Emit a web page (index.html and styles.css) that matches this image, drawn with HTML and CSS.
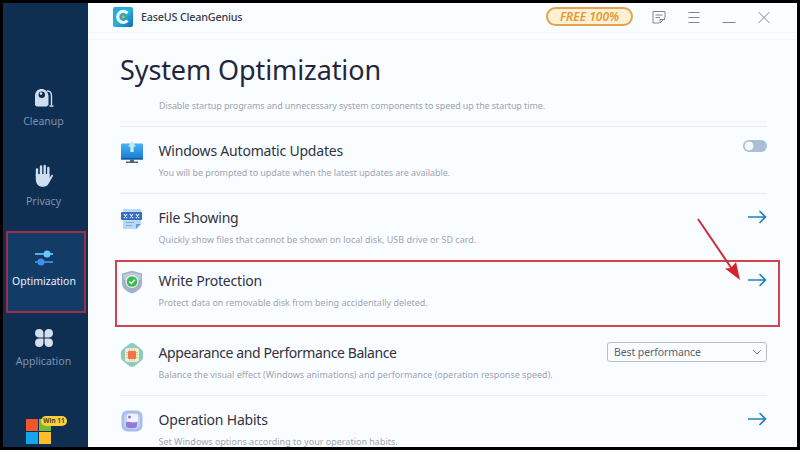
FILE: index.html
```html
<!DOCTYPE html>
<html lang="en">
<head>
    <meta charset="UTF-8">
    <meta name="viewport" content="width=device-width, initial-scale=1.0">
    <title>EaseUS CleanGenius</title>
    <link rel="stylesheet" href="styles.css">
</head>
<body>
    <div class="window">
        <nav class="sidebar">
            <a class="nav-item">
                <svg width="20" height="20" viewBox="0 0 20 20">
                    <path d="M1 17V8C1 3.500 4 1 7.500 1S14 3.500 14.500 8V17L12.500 18.500H2.500Z" fill="#cfddf0"/>
                    <circle cx="7.800" cy="6.800" r="3.200" fill="#12294a"/>
                    <circle cx="7" cy="5.600" r="1.300" fill="#cfddf0"/>
                    <path d="M13 3C16 2.500 17.500 5 17.500 8V17M15.500 18H19.500" fill="none" stroke="#cfddf0" stroke-width="1.400"/>
                </svg>
                <span>Cleanup</span>
            </a>
            <a class="nav-item">
                <svg width="20" height="24" viewBox="0 0 20 24">
                    <path d="M3 12V5.500M7 12V2.500M10.700 12V2M14.300 12V4" stroke="#cfddf0" stroke-width="2.400" stroke-linecap="round"/>
                    <path d="M1.800 10H15.500V14L17.300 11.300C18.200 10.300 19.400 11 18.800 12.300L15 19C13.500 21.800 12 22.800 9 22.800C4.500 22.800 1.800 20 1.800 15Z" fill="#cfddf0"/>
                </svg>
                <span>Privacy</span>
            </a>
            <a class="nav-item active">
                <svg width="20" height="16" viewBox="0 0 20 16">
                    <path d="M1 4H19" stroke="#5dbcf4" stroke-width="1.800"/>
                    <path d="M1 12H19" stroke="#3f8ff0" stroke-width="1.800"/>
                    <circle cx="13" cy="4" r="3.500" fill="#6cc8fa"/>
                    <circle cx="7" cy="12" r="3.500" fill="#3f8ff0"/>
                </svg>
                <span>Optimization</span>
            </a>
            <a class="nav-item">
                <svg width="20" height="20" viewBox="0 0 20 20" fill="#d3dfef">
                    <path d="M9.400 9.400H4.700A4.200 4.200 0 1 1 9.400 4.700Z"/>
                    <path d="M10.600 9.400V4.700A4.200 4.200 0 1 1 15.300 9.400Z"/>
                    <path d="M9.400 10.600V15.300A4.200 4.200 0 1 1 4.700 10.600Z"/>
                    <path d="M10.600 10.600H15.300A4.200 4.200 0 1 1 10.600 15.300Z"/>
                </svg>
                <span>Application</span>
            </a>
            <div class="os">
                <i class="red"></i><i class="green"></i><i class="blue"></i><i class="yellow"></i>
                <span class="os-badge">Win 11</span>
            </div>
        </nav>

        <main class="main">
            <header class="topbar">
                <svg width="20" height="20" viewBox="0 0 20 20">
                    <defs>
                        <linearGradient id="logo" x1="0" y1="0" x2="1" y2="1">
                            <stop offset="0" stop-color="#2ea6da"/>
                            <stop offset=".5" stop-color="#27b3d6"/>
                            <stop offset="1" stop-color="#1268b8"/>
                        </linearGradient>
                    </defs>
                    <rect width="20" height="20" rx="2" fill="url(#logo)"/>
                    <path d="M14.500 6.200A5.600 5.600 0 1 0 14.500 13.600" fill="none" stroke="#f0fbff" stroke-width="3"/>
                    <circle cx="10.300" cy="9.800" r="2.700" fill="#4e9b8d"/>
                    <path d="M8.500 10L10.300 8L12 10L10.300 11.500Z" fill="#a9c568"/>
                </svg>
                <span class="app-name">EaseUS CleanGenius</span>
                <span class="free">FREE 100%</span>
                <div class="controls">
                    <svg width="14" height="14" viewBox="0 0 14 14"><path d="M7.500 13H1V1.500H13V8L8 13V9.500H13M3.500 5H10.500M3.500 7.500H8"/></svg>
                    <svg width="14" height="14" viewBox="0 0 14 14"><path d="M1.500 2.500H12.500M1.500 7.500H12.500M1.500 12.500H12.500"/></svg>
                    <svg width="14" height="14" viewBox="0 0 14 14"><path d="M.5 12.500H13.500"/></svg>
                    <svg width="14" height="14" viewBox="0 0 14 14"><path d="M1.500 2L12.500 13M12.500 2L1.500 13"/></svg>
                </div>
            </header>

            <div class="heading">
                <h1>System Optimization</h1>
            </div>
            <p class="desc intro">Disable startup programs and unnecessary system components to speed up the startup time.</p>

            <section class="list">
                <div class="row">
                    <svg class="icon" width="24" height="24" viewBox="0 0 24 24">
                        <defs>
                            <linearGradient id="screen" x1="0" y1="0" x2="0" y2="1">
                                <stop offset="0" stop-color="#49b3f3"/>
                                <stop offset="1" stop-color="#1679cf"/>
                            </linearGradient>
                        </defs>
                        <rect x="1" y="3.500" width="22" height="16" rx="1" fill="url(#screen)"/>
                        <path d="M1 18H23V19.500H1Z" fill="#0c5b9f"/>
                        <path d="M10 19.500H14V21.500H18V23H6V21.500H10Z" fill="#4c6578"/>
                        <path d="M12 1L16 6.500H13.700V12H10.300V6.500H8Z" fill="#c8ebff"/>
                    </svg>
                    <div class="text">
                        <h2>Windows Automatic Updates</h2>
                        <p class="desc tight">You will be prompted to update when the latest updates are available.</p>
                    </div>
                    <span class="toggle"></span>
                </div>
                <div class="row">
                    <svg class="icon" width="24" height="24" viewBox="0 0 24 24">
                        <path d="M3 2H21V17L16 22H3Z" fill="#b9d7f7"/>
                        <path d="M21 17L16 22V17Z" fill="#6d9bd6"/>
                        <rect x="1" y="5" width="21" height="8" rx="1" fill="#356fc4"/>
                        <path d="M4 7L7 11M7 7L4 11M10 7L13 11M13 7L10 11M16 7L19 11M19 7L16 11" stroke="#e2f0ff" stroke-width="1.200"/>
                        <path d="M6 15.500H14M6 18.500H12" stroke="#7da9dd"/>
                    </svg>
                    <div class="text">
                        <h2>File Showing</h2>
                        <p class="desc">Quickly show files that cannot be shown on local disk, USB drive or SD card.</p>
                    </div>
                    <svg class="go" width="20" height="14" viewBox="0 0 20 14"><path d="M1 7H18.500M12.500 1L18.500 7L12.500 13"/></svg>
                </div>
                <div class="row marked">
                    <svg class="icon" width="24" height="24" viewBox="0 0 24 24">
                        <path d="M12 .8L22 3.500V13C22 18 18 21.500 12 23.500C6 21.500 2 18 2 13V3.500Z" fill="#a2b1c9"/>
                        <path d="M12 2.500L20.500 4.500V10H3.500V4.500Z" fill="#c0cada"/>
                        <circle cx="12" cy="11.500" r="6.500" fill="#e4f6e7"/>
                        <circle cx="12" cy="11.500" r="5.300" fill="#39bb55"/>
                        <path d="M9.300 11.500L11.300 13.500L14.800 9.800" fill="none" stroke="#fff" stroke-width="1.400"/>
                    </svg>
                    <div class="text">
                        <h2>Write Protection</h2>
                        <p class="desc">Protect data on removable disk from being accidentally deleted.</p>
                    </div>
                    <svg class="go" width="20" height="14" viewBox="0 0 20 14"><path d="M1 7H18.500M12.500 1L18.500 7L12.500 13"/></svg>
                    <svg class="pointer" width="50" height="70" viewBox="0 0 50 70">
                        <path d="M4 4L38 54" stroke="#c5303b" stroke-width="2"/>
                        <path d="M46 65L31 53.500L37 53L42 47Z" fill="#d7232f"/>
                    </svg>
                </div>
                <div class="row">
                    <svg class="icon" width="24" height="26" viewBox="0 0 24 26">
                        <path d="M8 3Q12 -1 16 3L21 7Q24 9 23 13Q24 17 21 19L16 23Q12 27 8 23L3 19Q0 17 1 13Q0 9 3 7Z" fill="#8fcabb"/>
                        <rect x="5" y="6" width="14" height="14" rx="3" fill="#e9efd9"/>
                        <rect x="8" y="9" width="8" height="8" rx=".8" fill="#f0744a"/>
                        <path d="M6 10.500H8M6 13H8M6 15.500H8M16 10.500H18M16 13H18M16 15.500H18M9.500 7V9M12 7V9M14.500 7V9M9.500 17V19M12 17V19M14.500 17V19" stroke="#f4b46f" stroke-width=".8"/>
                    </svg>
                    <div class="text">
                        <h2 class="long">Appearance and Performance Balance</h2>
                        <p class="desc">Balance the visual effect (Windows animations) and performance (operation response speed).</p>
                    </div>
                    <div class="select">
                        <span>Best performance</span>
                        <svg width="10" height="6" viewBox="0 0 10 6"><path d="M1 1L5 5L9 1"/></svg>
                    </div>
                </div>
                <div class="row">
                    <svg class="icon" width="24" height="24" viewBox="0 0 24 24">
                        <rect x="1.500" y="1.500" width="21" height="21" rx="6" fill="#a9bdec"/>
                        <rect x="4" y="4" width="16" height="16" rx="5" fill="#c4d1f7"/>
                        <rect x="7" y="5" width="11" height="8" rx="1.500" fill="#f3f3ff"/>
                        <circle cx="9.500" cy="8" r="1.500" fill="#7878d8"/>
                        <path d="M6 13.500C9 11 11 15 17 13V16Q17 19 14 19H9Q6 19 6 16Z" fill="#9678dc"/>
                    </svg>
                    <div class="text">
                        <h2>Operation Habits</h2>
                        <p class="desc">Set Windows options according to your operation habits.</p>
                    </div>
                    <svg class="go" width="20" height="14" viewBox="0 0 20 14"><path d="M1 7H18.500M12.500 1L18.500 7L12.500 13"/></svg>
                </div>
            </section>
        </main>
    </div>
</body>
</html>
```
FILE: styles.css
```css
* {
    box-sizing: border-box;
}

body {
    margin: 0;
    height: 100vh;
    padding: 3px;
    background-color: #000;
    font-family: "Noto Sans", "Open Sans", sans-serif;
    overflow: hidden;
}

h1, h2, p {
    margin: 0;
    font-weight: 400;
    white-space: nowrap;
}

svg {
    display: block;
    flex: none;
}

.window {
    display: flex;
    height: 444px;
    overflow: hidden;
    background-color: #fafdff;
}

/* Sidebar */
.sidebar {
    width: 85px;
    flex: none;
    padding-top: 69px;
    background-color: #0e2e52;
}

.nav-item {
    display: flex;
    flex-direction: column;
    align-items: center;
    justify-content: flex-end;
    height: 80px;
    margin: 0 2px 0 3px;
    padding: 0 5px 23px 0;
    font-size: 10.5px;
    line-height: 15px;
    color: #7f93ad;
}

.nav-item svg {
    margin-bottom: 6px;
}

.nav-item.active {
    height: 82px;
    margin-bottom: -1px;
    margin-top: -1px;
    padding: 0 4px 22px 0;
    border: 2px solid #a02d4c;
    background-color: #123b66;
    color: #e9f1fa;
}

.nav-item.active svg {
    margin-bottom: 8px;
}

.os {
    position: relative;
    display: grid;
    grid-template-columns: 12px 12px;
    grid-auto-rows: 12px;
    gap: 1px;
    width: 25px;
    margin: 27px 0 0 23px;
}

.red { background-color: #f1552b; }
.green { background-color: #7db72f; }
.blue { background-color: #14a5ee; }
.yellow { background-color: #fbbe2a; }

.os-badge {
    position: absolute;
    left: 15px;
    top: -3px;
    width: 26px;
    height: 10px;
    border-radius: 5px;
    background-color: #f6cf3d;
    color: #3b3213;
    font-size: 6.5px;
    font-weight: 600;
    line-height: 10px;
    text-align: center;
}

/* Content */
.main {
    flex: 1;
    min-width: 0;
}

.topbar {
    display: flex;
    align-items: center;
    height: 30px;
    padding: 0 26px 2px 25px;
    border-bottom: 1px solid #f1f5f8;
}

.app-name {
    margin-left: 8px;
    font-size: 10.8px;
    font-weight: 500;
    letter-spacing: -0.2px;
    color: #353b48;
}

.free {
    width: 87px;
    height: 19px;
    margin-left: auto;
    border: 2px solid #dfa553;
    border-radius: 10px;
    background-color: #fff0d3;
    color: #e39a33;
    font-size: 12px;
    font-style: italic;
    font-weight: 600;
    line-height: 15px;
    text-align: center;
}

.controls {
    display: flex;
    gap: 21px;
    margin-left: 19px;
    fill: none;
    stroke: #83868c;
}

.heading {
    height: 58px;
    margin-top: 6px;
    padding: 9px 0 0 32px;
    border-top: 1px solid #f3f7fa;
}

h1 {
    font-size: 27px;
    line-height: 42px;
    letter-spacing: -0.1px;
    color: #23263a;
}

.desc {
    font-size: 9px;
    line-height: 12px;
    color: #a0a4b0;
}

.intro {
    height: 25px;
    margin: 0 30px 0 32px;
    padding: 3px 0 0 39px;
    border-bottom: 1px solid #f0f4f8;
    letter-spacing: -0.1px;
}

.list {
    margin: 4px 30px 0 32px;
    border-top: 1px solid #e4ebf1;
}

.row {
    display: flex;
    align-items: flex-start;
    height: 67px;
    padding-top: 13px;
    border-bottom: 1px solid #e4ebf1;
}

.row h2 {
    font-size: 14px;
    line-height: 22px;
    letter-spacing: -0.2px;
    color: #30333f;
}

.row h2.long {
    letter-spacing: -0.4px;
}

.row .desc {
    margin-top: 5px;
}

.row .desc.tight {
    letter-spacing: -0.05px;
}

.text {
    flex: 1;
    margin-left: 14.5px;
}

.go {
    margin-top: 3px;
    fill: none;
    stroke: #2380b8;
    stroke-width: 1.6;
}

.toggle {
    width: 24px;
    height: 12px;
    border-radius: 6px;
    background: radial-gradient(circle at 6px 6px, #f4f9fd 4px, #a9bfd5 4.8px);
}

.row.marked {
    position: relative;
    height: 67px;
    margin: -1px -13px 2px -5px;
    padding: 8px 11px 0 3px;
    border: 2px solid #cf4450;
}

.pointer {
    position: absolute;
    right: 34px;
    top: -47px;
}

.select {
    display: flex;
    align-items: center;
    justify-content: space-between;
    width: 160px;
    height: 20px;
    padding: 0 4px 0 6px;
    border: 1px solid #b9bdc6;
    border-radius: 3px;
    font-size: 10.5px;
    letter-spacing: -0.1px;
    color: #5d606b;
}

.select svg {
    fill: none;
    stroke: #81868f;
}
```
